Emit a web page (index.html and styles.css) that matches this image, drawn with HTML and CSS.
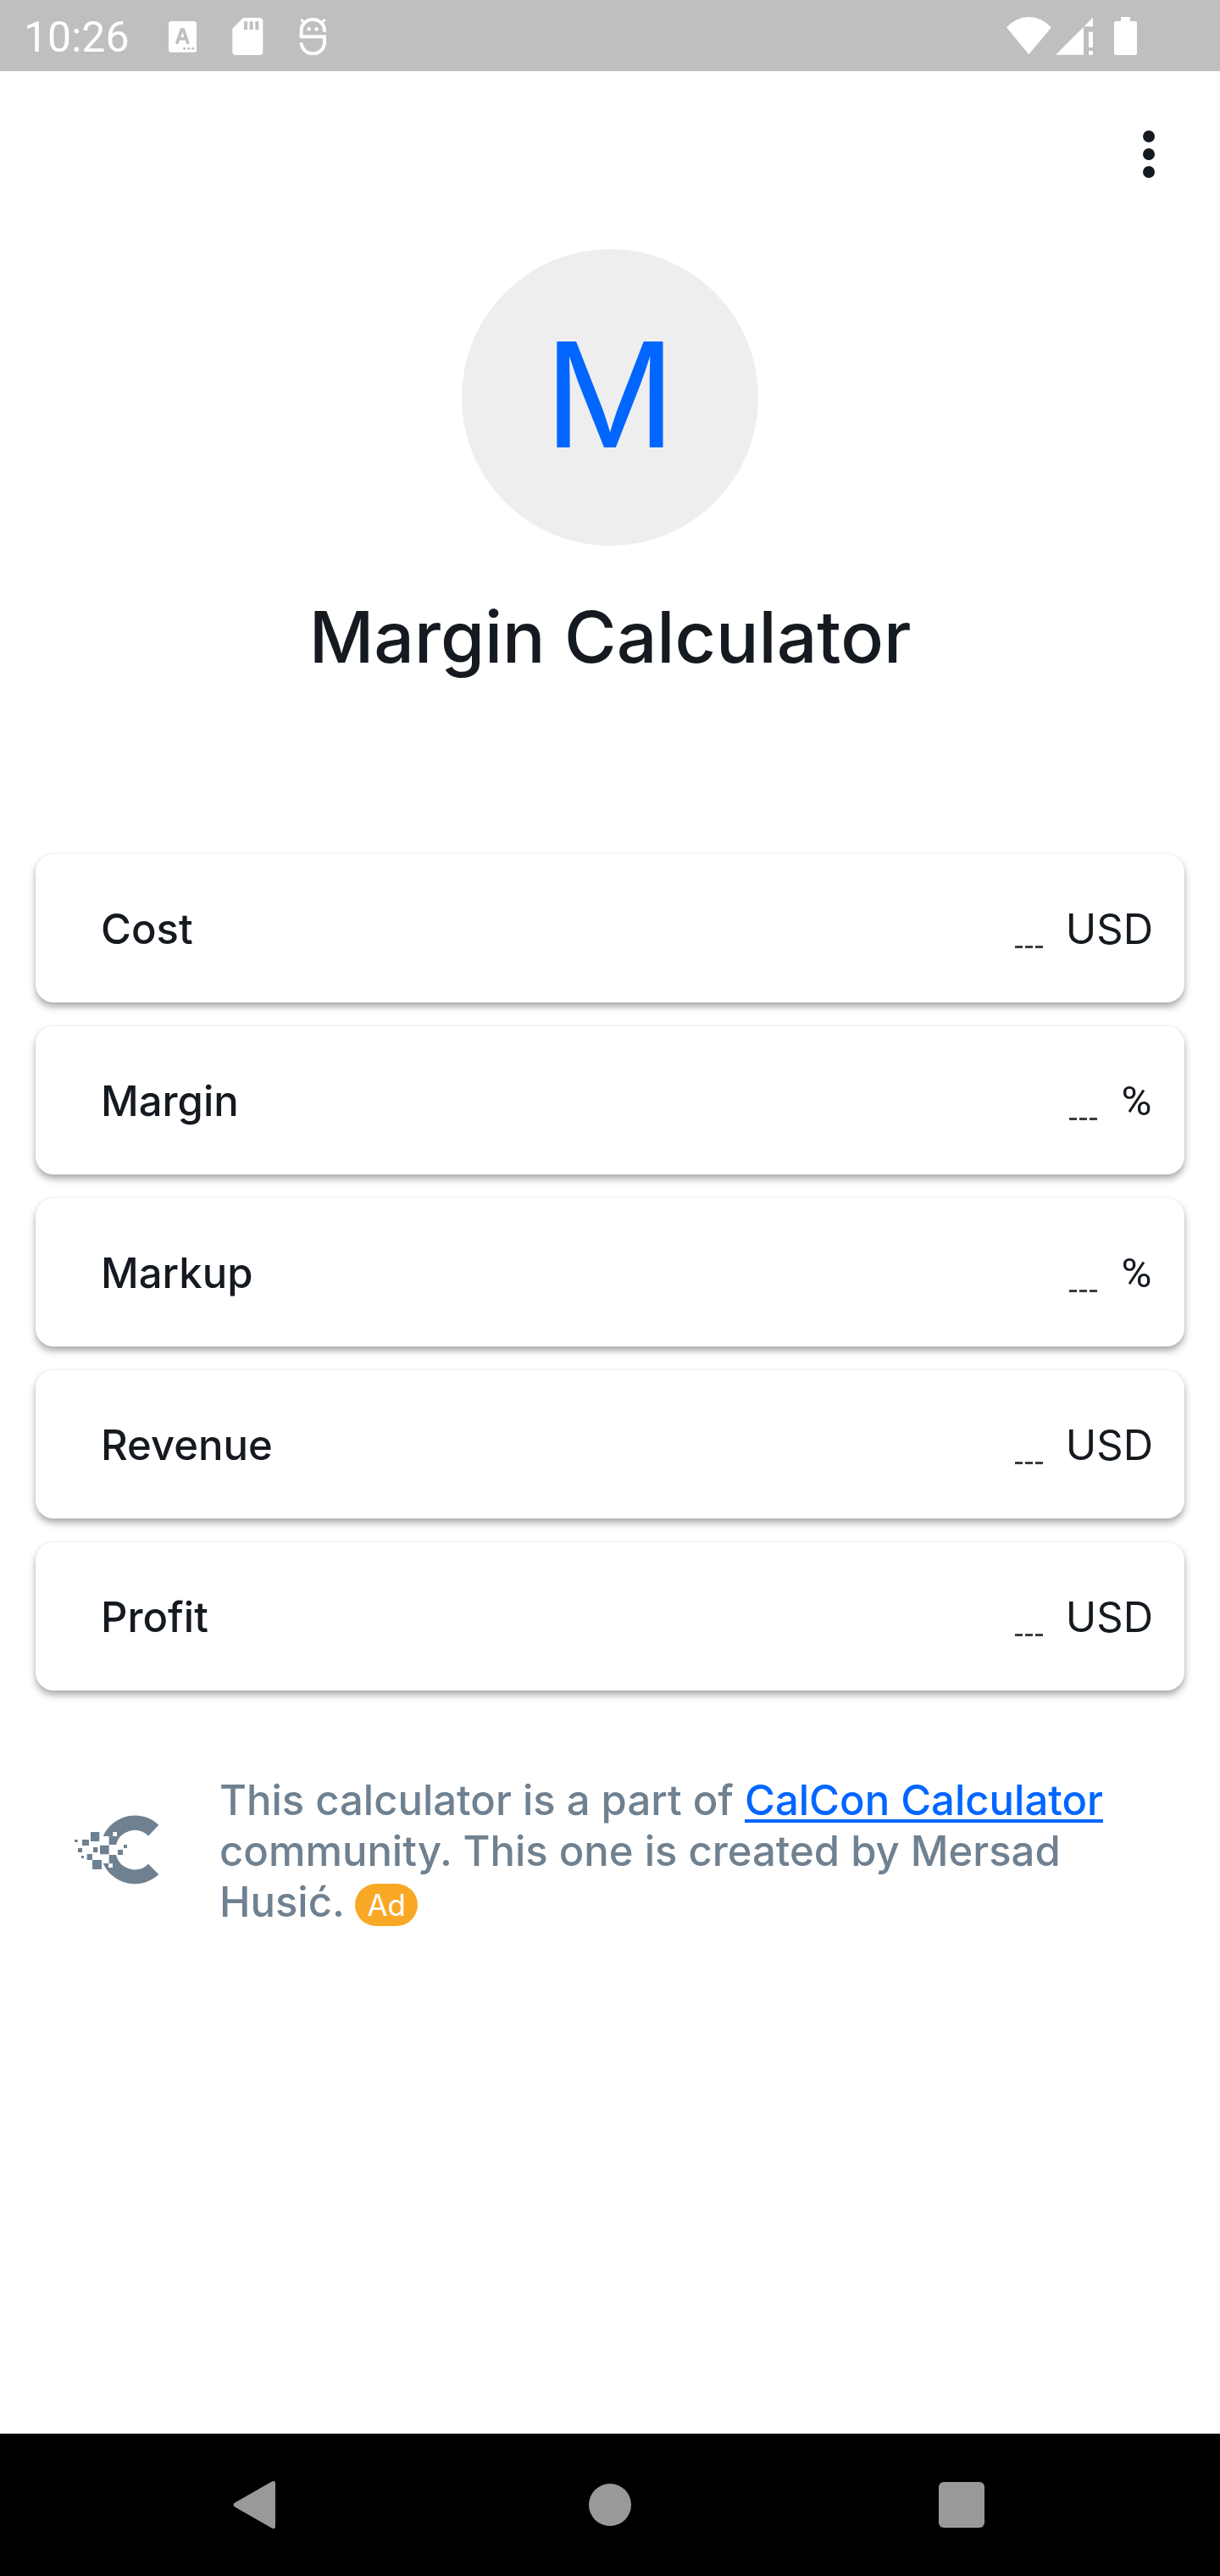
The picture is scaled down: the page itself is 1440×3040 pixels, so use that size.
FILE: index.html
```html
<!DOCTYPE html>
<html lang="en">
<head>
<meta charset="utf-8">
<meta name="viewport" content="width=device-width, initial-scale=1">
<title>Margin Calculator</title>
<link rel="stylesheet" href="styles.css">
</head>
<body>
<header class="status-bar">
  <time class="clock">10:26</time>
  <div class="notifications">
    <svg width="33" height="45" viewBox="597 57 99 135" aria-hidden="true">
      <rect x="597" y="72" width="99" height="110" rx="9" fill="#fff"/>
      <path d="M627 148 L643 102 H649 L665 148 M634 134 H658" fill="none" stroke="#bfbfbf" stroke-width="11" stroke-linecap="round" stroke-linejoin="round"/>
      <circle cx="653" cy="169" r="4.500" fill="#bfbfbf"/><circle cx="668" cy="169" r="4.500" fill="#bfbfbf"/><circle cx="683" cy="169" r="4.500" fill="#bfbfbf"/>
    </svg>
    <svg width="37" height="45" viewBox="822 57 111 135" aria-hidden="true">
      <path fill="#fff" fill-rule="evenodd" d="M861 60H919Q931 60 931 72V180Q931 192 919 192H835Q823 192 823 180V98ZM864 73V102H876V73ZM884 73V102H896V73ZM904 73V102H916V73Z"/>
    </svg>
    <svg width="33" height="45" viewBox="1059 57 99 135" aria-hidden="true">
      <g fill="none" stroke="#fff" stroke-width="12">
        <path d="M1149 110V104A41 38 0 0 0 1067 104V127H1149V148A41 39 0 0 1 1067 148"/>
        <path d="M1066 66L1078 78M1151 66L1139 78" stroke-width="9"/>
      </g>
      <circle cx="1094" cy="100" r="7" fill="#fff"/><circle cx="1121" cy="100" r="7" fill="#fff"/>
    </svg>
  </div>
  <div class="indicators">
    <svg width="53" height="45" viewBox="144 57 159 135" aria-hidden="true">
      <path fill="#fff" d="M223 190L144 94Q179 57 223 57T303 94Z"/>
    </svg>
    <svg width="44" height="45" viewBox="318 57 132 135" aria-hidden="true">
      <path fill="#fff" d="M318 191L450 59V91H417V191ZM435 110H450V165H435ZM435 177H450V191H435Z"/>
    </svg>
    <svg class="battery" width="27" height="45" viewBox="525 57 81 135" aria-hidden="true">
      <path fill="#fff" d="M549 57H582V72H599Q606 72 606 79V185Q606 192 599 192H532Q525 192 525 185V79Q525 72 532 72H549Z"/>
    </svg>
  </div>
</header>

<main class="app">
  <div class="toolbar">
    <button class="menu-button" type="button" aria-label="More options">
      <svg width="14" height="56" viewBox="0 0 14 56" aria-hidden="true">
        <circle cx="7" cy="7" r="7"/><circle cx="7" cy="28" r="7"/><circle cx="7" cy="49" r="7"/>
      </svg>
    </button>
  </div>

  <div class="avatar">M</div>
  <h1 class="title">Margin Calculator</h1>

  <form class="fields">
    <label class="field"><span class="field-name">Cost</span><input class="field-value" type="text" inputmode="decimal" name="cost"><span>USD</span></label>
    <label class="field"><span class="field-name">Margin</span><input class="field-value" type="text" inputmode="decimal" name="margin"><span class="percent">%</span></label>
    <label class="field"><span class="field-name">Markup</span><input class="field-value" type="text" inputmode="decimal" name="markup"><span class="percent">%</span></label>
    <label class="field"><span class="field-name">Revenue</span><input class="field-value" type="text" inputmode="decimal" name="revenue"><span>USD</span></label>
    <label class="field"><span class="field-name">Profit</span><input class="field-value" type="text" inputmode="decimal" name="profit"><span>USD</span></label>
  </form>

  <footer class="credits">
    <svg class="logo" width="103" height="84" viewBox="21 60 309 252" aria-hidden="true">
      <g fill="#6f8190">
        <path d="M322 98A123 123 0 0 0 125 138H146V168H171A68 68 0 0 1 285 137Z"/>
        <path d="M322 273A123 123 0 0 1 125 234H146V204H171A68 68 0 0 0 285 236Z"/>
        <path d="M114 170H146V202H114ZM81 123H112V156H81ZM51 150H75V171H51ZM24 150H35V159H24ZM36 180H51V195H36ZM90 177H106V195H90ZM48 207H57V216H48ZM68 201H87V222H68ZM87 222H120V255H87ZM177 186H195V204H177ZM198 168H210V180H198Z"/>
      </g>
      <path fill="#fff" d="M160 123H174V138H160ZM144 235H159V249H144Z"/>
    </svg>
    <p class="credits-text">This calculator is a part of <a class="link" href="#">CalCon Calculator</a> community. This one is created by Mersad Husić. <span class="ad-badge">Ad</span></p>
  </footer>
</main>

<nav class="nav-bar" aria-label="System navigation">
  <button class="nav-button" type="button" aria-label="Back">
    <svg width="84" height="84" viewBox="0 0 84 84" aria-hidden="true"><path d="M15 39L57 15Q62 12 62 17V67Q62 72 57 69L15 45Q10 42 15 39Z"/></svg>
  </button>
  <button class="nav-button" type="button" aria-label="Home">
    <svg width="84" height="84" viewBox="0 0 84 84" aria-hidden="true"><circle cx="42" cy="42" r="25"/></svg>
  </button>
  <button class="nav-button" type="button" aria-label="Recent apps">
    <svg width="84" height="84" viewBox="0 0 84 84" aria-hidden="true"><rect x="15" y="15" width="54" height="54" rx="6"/></svg>
  </button>
</nav>
</body>
</html>
```
FILE: styles.css
```css
* {
  box-sizing: border-box;
}

body {
  margin: 0;
  min-height: 100vh;
  display: flex;
  flex-direction: column;
  background: #fff;
  color: #151a20;
  font-family: Inter, "Liberation Sans", sans-serif;
  font-size: 49px;
  line-height: 60px;
}

button {
  padding: 0;
  border: 0;
  background: none;
  cursor: pointer;
}

svg {
  display: block;
}

.status-bar {
  display: flex;
  align-items: center;
  height: 84px;
  padding: 0 98px 0 28px;
  background: #bfbfbf;
  color: #fff;
}

.clock {
  padding-top: 4px;
  font-family: Roboto, sans-serif;
  font-size: 50px;
}

.notifications {
  display: flex;
  gap: 42px;
  margin-left: 46px;
}

.indicators {
  display: flex;
  gap: 5px;
  margin-left: auto;
}

.battery {
  margin-left: 20px;
}

.app {
  flex: 1;
  display: flex;
  flex-direction: column;
  padding: 42px;
}

.toolbar {
  display: flex;
  justify-content: flex-end;
}

.menu-button {
  display: grid;
  place-items: center;
  width: 84px;
  height: 112px;
  fill: #151a20;
}

.avatar {
  display: grid;
  place-items: center;
  align-self: center;
  width: 350px;
  height: 350px;
  margin-top: 56px;
  padding-bottom: 8px;
  border-radius: 50%;
  background: #eee;
  color: #06f;
  font-size: 172px;
  line-height: 210px;
}

.title {
  margin: 57px 0 0;
  font-size: 84px;
  font-weight: 500;
  line-height: 102px;
  text-align: center;
}

.fields {
  display: flex;
  flex-direction: column;
  gap: 28px;
  margin-top: 205px;
}

.field {
  display: flex;
  align-items: center;
  gap: 27px;
  height: 175px;
  padding: 2px 37px 0 77px;
  border-radius: 21px;
  background: #fff;
  box-shadow: 0 5px 8px rgba(0, 0, 0, 0.34), 0 0 2px rgba(0, 0, 0, 0.08);
}

.field-name {
  flex: 1;
  font-weight: 500;
}

.field-value {
  width: 33px;
  height: 44px;
  padding: 0;
  border: 0;
  background: repeating-linear-gradient(to right, #3a3d40 0 9px, transparent 9px 12px) left bottom / 100% 3px no-repeat;
  color: inherit;
  font: inherit;
  text-align: right;
}

.percent {
  min-width: 39px;
  font-family: Roboto, sans-serif;
  text-align: center;
}

.credits {
  display: flex;
  align-items: flex-start;
  gap: 69px;
  margin-top: 100px;
  padding: 0 45px;
}

.logo {
  flex: none;
  margin-top: 46px;
}

.credits-text {
  margin: 0;
  color: #6f8190;
  font-weight: 500;
}

.link {
  color: #06f;
  text-decoration: underline 4px;
  text-underline-offset: 5px;
}

.ad-badge {
  display: inline-block;
  padding: 0 14px;
  border-radius: 25px;
  background: #f9a826;
  color: #fff;
  font-size: 35px;
  font-weight: 400;
  line-height: 50px;
  vertical-align: 1px;
}

.nav-bar {
  display: flex;
  height: 168px;
  padding: 0 97px;
  background: #000;
}

.nav-button {
  flex: 1;
  display: grid;
  place-items: center;
  fill: #999;
}
```
